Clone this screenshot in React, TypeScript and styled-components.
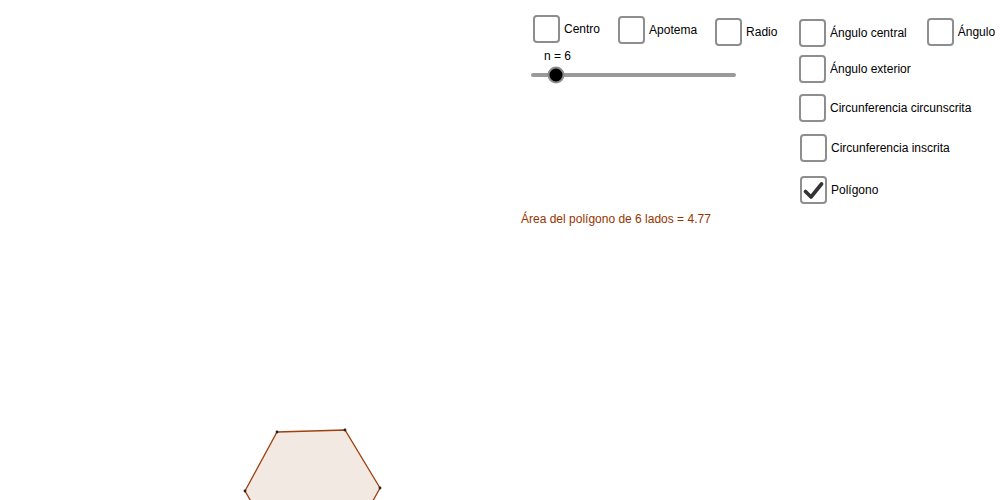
import React from 'react';
import styled, { createGlobalStyle } from 'styled-components';

const GlobalStyle = createGlobalStyle`
	html, body {
		margin: 0;
		padding: 0;
		background: #ffffff;
	}
	body {
		font-family: "Liberation Sans", Arial, sans-serif;
	}
`;

const Canvas = styled.div`
	position: relative;
	width: 1000px;
	height: 500px;
	overflow: hidden;
	background: #ffffff;
`;

const Drawing = styled.svg`
	position: absolute;
	left: 0;
	top: 0;
`;

// controls panel sits on the geometry canvas
const Panel = styled.div`
	position: absolute;
	left: 521px;
	top: 15px;
	display: grid;
	grid-template-columns: 278px auto;
	align-items: start;
`;

const LeftCol = styled.div`
	display: flex;
	flex-direction: column;
`;

const RightCol = styled.div`
	display: flex;
	flex-direction: column;
	gap: 11px;
	padding-top: 4px;
`;

const CheckRow = styled.div<{ $gap: number; $pad?: number }>`
	display: flex;
	align-items: flex-start;
	gap: ${(p) => p.$gap}px;
	padding-left: ${(p) => p.$pad ?? 0}px;
`;

const Option = styled.label<{ $nudge?: number; $shift?: number }>`
	display: flex;
	align-items: center;
	gap: 4px;
	margin-top: ${(p) => p.$nudge ?? 0}px;
	margin-left: ${(p) => p.$shift ?? 0}px;
	cursor: pointer;
`;

const Box = styled.span`
	box-sizing: border-box;
	width: 27px;
	height: 28px;
	border: 2px solid #8e8e8e;
	border-radius: 4px;
	background: #ffffff;
	display: flex;
	align-items: center;
	justify-content: center;
`;

const Label = styled.span`
	font-size: 12px;
	color: #000000;
	white-space: nowrap;
`;

const Slider = styled.div`
	width: 205px;
	margin-left: 10px;
	margin-top: 3px;
`;

const SliderCaption = styled.div`
	font-size: 12px;
	line-height: 14px;
	color: #000000;
	margin-left: 13px;
`;

const Track = styled.div`
	position: relative;
	margin-top: 10px;
	height: 4px;
	border-radius: 2px;
	background: #9a9a9a;
`;

const Thumb = styled.div`
	position: absolute;
	top: 50%;
	box-sizing: border-box;
	width: 17px;
	height: 17px;
	border-radius: 50%;
	background: #000000;
	border: 2px solid #8c8c8c;
	transform: translate(-50%, -50%);
`;

const AreaText = styled.div`
	margin-top: 135px;
	font-size: 12px;
	color: #993300;
	white-space: nowrap;
`;

const Check = () => (
	<svg width="21" height="19" viewBox="0 0 21 19">
		<path
			d="M2.5 10.5 L8 16 L18.5 3"
			fill="none"
			stroke="#333333"
			strokeWidth="3.6"
			strokeLinecap="round"
			strokeLinejoin="round"
		/>
	</svg>
);

const CheckOption: React.FC<{
	text: string;
	checked?: boolean;
	nudge?: number;
	shift?: number;
}> = ({ text, checked, nudge, shift }) => (
	<Option $nudge={nudge} $shift={shift}>
		<Box>{checked && <Check />}</Box>
		<Label>{text}</Label>
	</Option>
);

// regular hexagon, n = 6
const hexagon: [number, number][] = [
	[277, 432],
	[345, 430],
	[380, 488],
	[347, 548],
	[279, 550],
	[245, 491],
];

const App: React.FC = () => {
	const n = 6;
	const thumbLeft = ((n - 3) / 25) * 100;

	return (
		<>
			<GlobalStyle />
			<Canvas>
				<Drawing width="1000" height="500" viewBox="0 0 1000 500">
					<polygon
						points={hexagon.map((p) => p.join(',')).join(' ')}
						fill="#f3e9e3"
						stroke="#a0400f"
						strokeWidth="1.3"
					/>
					{hexagon.map(([x, y], i) => (
						<circle key={i} cx={x} cy={y} r="1.4" fill="#222" />
					))}
				</Drawing>

				<Panel>
					<LeftCol>
						<CheckRow $gap={18} $pad={12}>
							<CheckOption text="Centro" />
							<CheckOption text="Apotema" nudge={1} />
							<CheckOption text="Radio" nudge={3} />
						</CheckRow>
						<Slider>
							<SliderCaption>n = {n}</SliderCaption>
							<Track>
								<Thumb style={{ left: `${thumbLeft}%` }} />
							</Track>
						</Slider>
						<AreaText>Área del polígono de 6 lados = 4.77</AreaText>
					</LeftCol>

					<RightCol>
						<CheckRow $gap={20}>
							<CheckOption text="Ángulo central" />
							<CheckOption text="Ángulo" nudge={-1} />
						</CheckRow>
						<CheckOption text="Ángulo exterior" nudge={-3} />
						<CheckOption text="Circunferencia circunscrita" />
						<CheckOption text="Circunferencia inscrita" nudge={1} shift={1} />
						<CheckOption text="Polígono" checked nudge={3} shift={1} />
					</RightCol>
				</Panel>
			</Canvas>
		</>
	);
};

export default App;
